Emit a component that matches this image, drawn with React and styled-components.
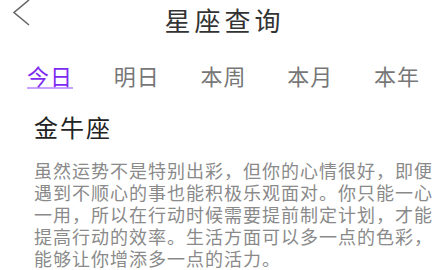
import React, { useState } from "react";
import styled, { createGlobalStyle } from "styled-components";

const Global = createGlobalStyle`
  html, body { margin: 0; padding: 0; background: #ffffff; }
  body { font-family: "Noto Sans CJK SC", "Noto Sans", sans-serif; }
`;

const Page = styled.div`
  width: 434px;
  height: 270px;
  overflow: hidden;
  background: #fff;
`;

const Header = styled.header`
  height: 40px;
  display: grid;
  grid-template-columns: 1fr auto 1fr;
  align-items: center;
`;

const BackButton = styled.button`
  justify-self: start;
  align-self: start;
  margin: -1px 0 0 11px;
  padding: 0;
  border: 0;
  background: none;
  width: 20px;
  height: 27px;
  display: flex;
`;

const Title = styled.h1`
  margin: 0;
  padding-left: 15px;
  font-size: 26px;
  line-height: 40px;
  font-weight: 400;
  letter-spacing: 4px;
  color: #333;
`;

const Tabs = styled.nav`
  margin-top: 24px;
  display: flex;
  justify-content: space-between;
  padding: 0 14px 0 27px;
`;

const Tab = styled.div`
  font-size: 22px;
  line-height: 22px;
  letter-spacing: 1px;
  padding-bottom: 1px;
  color: ${(p) => (p.$active ? "#7d2bf0" : "#777")};
  border-bottom: 2px solid ${(p) => (p.$active ? "#c9a2ff" : "transparent")};
  cursor: pointer;
`;

const Section = styled.section`
  padding: 25px 0 0 34px;
`;

const SignName = styled.h2`
  margin: 0;
  font-size: 24px;
  line-height: 26px;
  font-weight: 400;
  letter-spacing: 2px;
  color: #222;
`;

const Paragraph = styled.p`
  margin: 19px 0 0;
  width: 400px;
  font-size: 18px;
  line-height: 22px;
  letter-spacing: 1px;
  color: #8a8a8a;
`;

const tabs = ["今日", "明日", "本周", "本月", "本年"];

export default function App() {
  const [active, setActive] = useState(0);
  return (
    <Page>
      <Global />
      <Header>
        <BackButton aria-label="返回">
          <svg width="20" height="27" viewBox="0 0 20 27">
            <path d="M18 1 L3 13.5 L18 26" fill="none" stroke="#666" strokeWidth="1.6" />
          </svg>
        </BackButton>
        <Title>星座查询</Title>
        <span />
      </Header>
      <Tabs>
        {tabs.map((t, i) => (
          <Tab key={t} $active={i === active} onClick={() => setActive(i)}>
            {t}
          </Tab>
        ))}
      </Tabs>
      <Section>
        <SignName>金牛座</SignName>
        <Paragraph>
          虽然运势不是特别出彩，但你的心情很好，即便遇到不顺心的事也能积极乐观面对。你只能一心一用，所以在行动时候需要提前制定计划，才能提高行动的效率。生活方面可以多一点的色彩，能够让你增添多一点的活力。
        </Paragraph>
      </Section>
    </Page>
  );
}
